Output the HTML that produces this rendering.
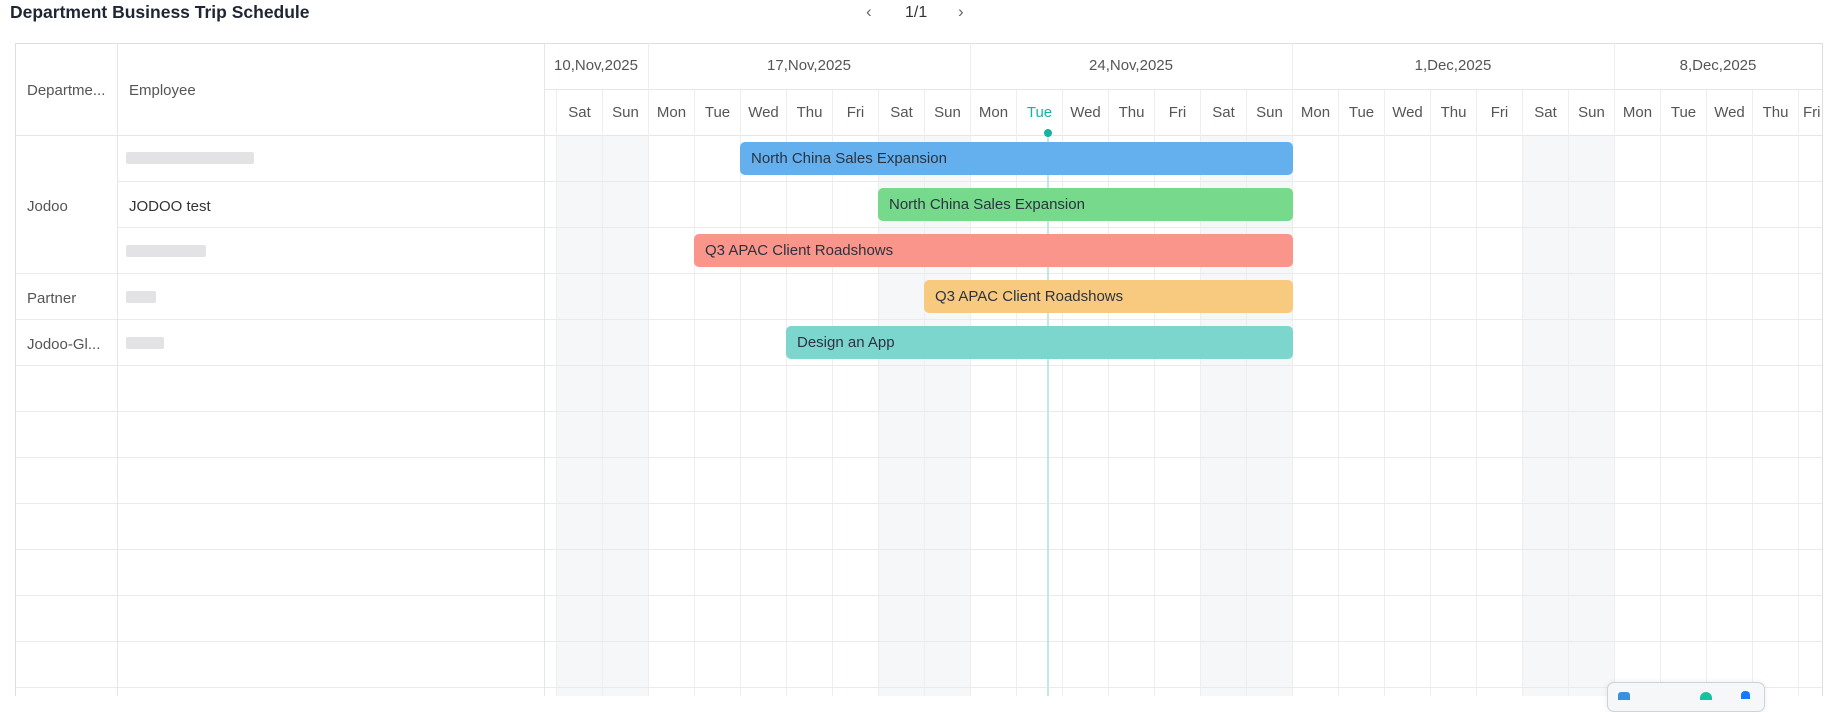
<!DOCTYPE html>
<html><head><meta charset="utf-8"><style>
*{margin:0;padding:0;box-sizing:border-box}
body{width:1835px;height:696px;overflow:hidden;background:#fff;font-family:"Liberation Sans",sans-serif;color:#555;position:relative;font-size:15px}
.a{position:absolute}
.vl{position:absolute;width:1px;background:#eceef0}
.hl{position:absolute;height:1px;background:#e4e6e8}
.d{position:absolute;top:90px;height:46px;width:46px;line-height:46px;text-align:center;font-size:15px;color:#555;border-left:1px solid #eceef0}
.we{position:absolute;top:136px;height:560px;width:46px;background:#f5f7f8}
.bar{position:absolute;height:33px;border-radius:5px;line-height:33px;padding-left:11px;font-size:15px;color:#2b3340}
.blur{position:absolute;height:12px;background:#dcdcde;border-radius:2px;opacity:.8}
</style></head><body>
<div class="a" style="left:10px;top:2px;font-size:17.5px;font-weight:bold;color:#1f2633">Department Business Trip Schedule</div>
<div class="a" style="left:866px;top:2px;font-size:17px;color:#666">&#8249;</div>
<div class="a" style="left:905px;top:4px;font-size:16px;color:#333">1/1</div>
<div class="a" style="left:958px;top:2px;font-size:17px;color:#666">&#8250;</div>

<div class="we" style="left:556px"></div><div class="we" style="left:602px"></div>
<div class="we" style="left:878px"></div><div class="we" style="left:924px"></div>
<div class="we" style="left:1200px"></div><div class="we" style="left:1246px"></div>
<div class="we" style="left:1522px"></div><div class="we" style="left:1568px"></div>

<div class="a" style="left:556px;top:136px;width:1266px;height:560px;background:repeating-linear-gradient(to right,#eceef0 0 1px,transparent 1px 46px);"></div>
<div class="a" style="left:117px;top:136px;width:1705px;height:560px;background:repeating-linear-gradient(to bottom,transparent 0 45px,#e8eaec 45px 46px);"></div>
<div class="a" style="left:16px;top:136px;width:101px;height:137px;background:#fff"></div>
<div class="a" style="left:16px;top:273px;width:101px;height:423px;background:repeating-linear-gradient(to bottom,#e8eaec 0 1px,transparent 1px 46px);"></div>

<div class="hl" style="left:15px;top:43px;width:1808px;background:#dcdfe2"></div>
<div class="hl" style="left:544px;top:89px;width:1278px"></div>
<div class="hl" style="left:15px;top:135px;width:1808px"></div>
<div class="vl" style="left:15px;top:43px;height:653px;background:#dcdfe2"></div>
<div class="vl" style="left:1822px;top:43px;height:653px;background:#dcdfe2"></div>
<div class="vl" style="left:117px;top:43px;height:653px;background:#e4e6e8"></div>
<div class="vl" style="left:544px;top:43px;height:653px;background:#e4e6e8"></div>
<div class="vl" style="left:648px;top:43px;height:47px"></div>
<div class="vl" style="left:970px;top:43px;height:47px"></div>
<div class="vl" style="left:1292px;top:43px;height:47px"></div>
<div class="vl" style="left:1614px;top:43px;height:47px"></div>

<div class="a" style="left:27px;top:82px">Departme...</div>
<div class="a" style="left:129px;top:82px">Employee</div>

<div class="a" style="left:544px;top:57px;width:104px;text-align:center">10,Nov,2025</div>
<div class="a" style="left:648px;top:57px;width:322px;text-align:center">17,Nov,2025</div>
<div class="a" style="left:970px;top:57px;width:322px;text-align:center">24,Nov,2025</div>
<div class="a" style="left:1292px;top:57px;width:322px;text-align:center">1,Dec,2025</div>
<div class="a" style="left:1614px;top:57px;width:208px;text-align:center">8,Dec,2025</div>

<div class="d" style="left:556px">Sat</div><div class="d" style="left:602px">Sun</div>
<div class="d" style="left:648px">Mon</div><div class="d" style="left:694px">Tue</div>
<div class="d" style="left:740px">Wed</div><div class="d" style="left:786px">Thu</div>
<div class="d" style="left:832px">Fri</div><div class="d" style="left:878px">Sat</div>
<div class="d" style="left:924px">Sun</div><div class="d" style="left:970px">Mon</div>
<div class="d" style="left:1016px;color:#14b3a2">Tue</div><div class="d" style="left:1062px">Wed</div>
<div class="d" style="left:1108px">Thu</div><div class="d" style="left:1154px">Fri</div>
<div class="d" style="left:1200px">Sat</div><div class="d" style="left:1246px">Sun</div>
<div class="d" style="left:1292px">Mon</div><div class="d" style="left:1338px">Tue</div>
<div class="d" style="left:1384px">Wed</div><div class="d" style="left:1430px">Thu</div>
<div class="d" style="left:1476px">Fri</div><div class="d" style="left:1522px">Sat</div>
<div class="d" style="left:1568px">Sun</div><div class="d" style="left:1614px">Mon</div>
<div class="d" style="left:1660px">Tue</div><div class="d" style="left:1706px">Wed</div>
<div class="d" style="left:1752px">Thu</div><div class="d" style="left:1798px;width:24px;text-align:left;padding-left:4px;overflow:hidden">Fri</div>

<div class="a" style="left:1047px;top:132px;width:2px;height:564px;background:#bfe9e3"></div>
<div class="a" style="left:1044px;top:129px;width:8px;height:8px;border-radius:50%;background:#14b3a2"></div>

<div class="a" style="left:27px;top:198px">Jodoo</div>
<div class="a" style="left:27px;top:290px">Partner</div>
<div class="a" style="left:27px;top:336px">Jodoo-Gl...</div>
<div class="blur" style="left:126px;top:152px;width:128px"></div>
<div class="a" style="left:129px;top:198px;color:#333">JODOO test</div>
<div class="blur" style="left:126px;top:245px;width:80px"></div>
<div class="blur" style="left:126px;top:291px;width:30px"></div>
<div class="blur" style="left:126px;top:337px;width:38px"></div>

<div class="bar" style="left:740px;top:142px;width:553px;background:#64b0ee">North China Sales Expansion</div>
<div class="bar" style="left:878px;top:188px;width:415px;background:#76d98b">North China Sales Expansion</div>
<div class="bar" style="left:694px;top:234px;width:599px;background:#f9958a">Q3 APAC Client Roadshows</div>
<div class="bar" style="left:924px;top:280px;width:369px;background:#f8ca7f">Q3 APAC Client Roadshows</div>
<div class="bar" style="left:786px;top:326px;width:507px;background:#7dd6ce">Design an App</div>

<div class="a" style="left:1607px;top:682px;width:158px;height:30px;border:1px solid #cfd2d6;border-radius:7px;background:#f6f7f8;box-shadow:0 0 6px rgba(0,0,0,.08)"></div>
<div class="a" style="left:1618px;top:692px;width:12px;height:8px;background:#3a8fe0;border-radius:3px 3px 0 0"></div>
<div class="a" style="left:1700px;top:692px;width:12px;height:8px;background:#16c2a0;border-radius:6px 6px 0 0"></div>
<div class="a" style="left:1741px;top:691px;width:9px;height:8px;background:#1677ff;border-radius:4px 4px 0 0"></div>
</body></html>
